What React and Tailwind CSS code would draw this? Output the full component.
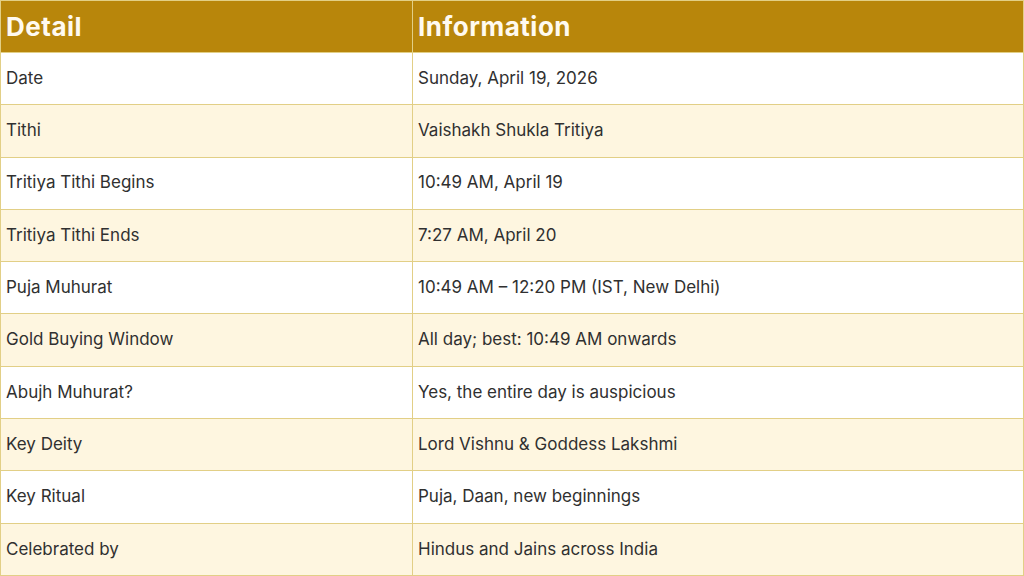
const rows = [
  ['Date', 'Sunday, April 19, 2026'],
  ['Tithi', 'Vaishakh Shukla Tritiya'],
  ['Tritiya Tithi Begins', '10:49 AM, April 19'],
  ['Tritiya Tithi Ends', '7:27 AM, April 20'],
  ['Puja Muhurat', '10:49 AM – 12:20 PM (IST, New Delhi)'],
  ['Gold Buying Window', 'All day; best: 10:49 AM onwards'],
  ['Abujh Muhurat?', 'Yes, the entire day is auspicious'],
  ['Key Deity', 'Lord Vishnu & Goddess Lakshmi'],
  ['Key Ritual', 'Puja, Daan, new beginnings'],
  ['Celebrated by', 'Hindus and Jains across India'],
];

export default function App() {
  return (
    <div className="h-[576px] w-[1024px] overflow-hidden bg-white font-['Inter','Noto_Sans',sans-serif]">
      <table className="h-[576px] w-full table-fixed border-collapse">
        <colgroup>
          <col className="w-[412px]" />
          <col />
        </colgroup>
        <thead>
          <tr className="h-[52px] bg-[#b8860b]">
            <th className="border border-[#e2cf86] pl-[5px] text-left text-[26px] font-bold tracking-[0.5px] text-[#fffaf0]">Detail</th>
            <th className="border border-[#e2cf86] pl-[5px] text-left text-[26px] font-bold tracking-[0.5px] text-[#fffaf0]">Information</th>
          </tr>
        </thead>
        <tbody>
          {rows.map(([k, v], i) => (
            <tr key={k} className={i % 2 === 0 ? 'bg-white' : 'bg-[#fef6e0]'}>
              <td className="border border-[#e2cf86] pl-[5px] text-[17px] text-[#303030]">{k}</td>
              <td className="border border-[#e2cf86] pl-[5px] text-[17px] text-[#303030]">{v}</td>
            </tr>
          ))}
        </tbody>
      </table>
    </div>
  );
}
